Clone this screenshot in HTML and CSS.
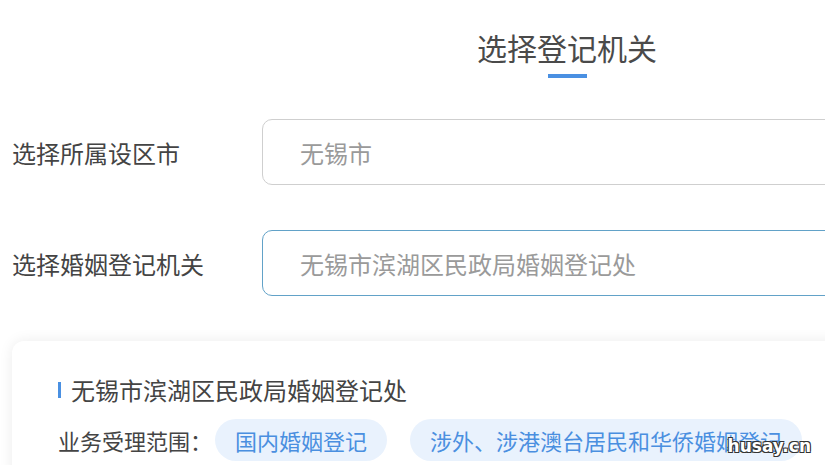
FILE: index.html
```html
<!DOCTYPE html>
<html>
  <head>
    <meta charset="utf-8">
    <meta name="viewport" content="width=device-width, initial-scale=1">
    <title>选择登记机关</title>
    <link rel="stylesheet" href="styles.css">
  </head>
  <body>
    <div class="page">
      <div class="page__header">
        <h1 class="page__title">选择登记机关</h1>
        <span class="page__underline"></span>
      </div>

      <form class="office-form">
        <div class="office-form__row">
          <label class="office-form__label">选择所属设区市</label>
          <input class="office-form__input" type="text" placeholder="无锡市" readonly>
        </div>
        <div class="office-form__row">
          <label class="office-form__label">选择婚姻登记机关</label>
          <input class="office-form__input office-form__input--active" type="text" placeholder="无锡市滨湖区民政局婚姻登记处" readonly>
        </div>
      </form>

      <div class="office-card">
        <div class="office-card__title">无锡市滨湖区民政局婚姻登记处</div>
        <div class="office-card__scope">
          <span class="office-card__scope-label">业务受理范围：</span>
          <span class="office-card__tag">国内婚姻登记</span>
          <span class="office-card__tag">涉外、涉港澳台居民和华侨婚姻登记</span>
        </div>
      </div>
    </div>
    <div class="watermark">husay.cn</div>
  </body>
</html>
```

FILE: styles.css
```css
html, body {
    margin: 0;
    padding: 0;
    background: #fff;
    overflow: hidden;
}
body {
    font-family: "Noto Sans CJK SC", "Noto Sans", sans-serif;
    color: #444;
    width: 825px;
    height: 465px;
    position: relative;
}

.page {
    width: 1134px;
}

.page__header {
    padding-top: 27px;
    display: flex;
    flex-direction: column;
    align-items: center;
}
.page__title {
    margin: 0;
    font-size: 30px;
    font-weight: normal;
    line-height: 40px;
    color: #4a4a4a;
}
.page__underline {
    display: block;
    width: 39px;
    height: 4px;
    margin-top: 7px;
    background: #4a90e2;
}

.office-form {
    margin-top: 41px;
    padding-left: 12px;
    display: flex;
    flex-direction: column;
    gap: 45px;
}
.office-form__row {
    display: flex;
    align-items: center;
}
.office-form__label {
    width: 250px;
    font-size: 24px;
    color: #444;
}
.office-form__input {
    flex: 1;
    height: 66px;
    box-sizing: border-box;
    border: 1px solid #cfcfcf;
    border-radius: 10px;
    padding: 0 37px;
    font-family: inherit;
    font-size: 24px;
    outline: none;
    background: #fff;
}
.office-form__input::placeholder {
    color: #9a9a9a;
}
.office-form__input--active {
    border-color: #62a2c8;
}

.office-card {
    margin: 45px 12px 0 12px;
    padding: 33px 46px 20px 46px;
    border-radius: 12px;
    background: #fff;
    box-shadow: 0 0 14px rgba(0, 0, 0, 0.08);
}
.office-card__title {
    font-size: 24px;
    line-height: 32px;
    color: #444;
    padding-left: 13px;
    position: relative;
}
.office-card__title::before {
    content: "";
    position: absolute;
    left: 0;
    top: 8px;
    width: 3px;
    height: 16px;
    background: #4a90e2;
}
.office-card__scope {
    margin-top: 13px;
    display: flex;
    align-items: center;
    gap: 23px;
}
.office-card__scope-label {
    font-size: 22px;
    color: #444;
    margin-right: -20px;
}
.office-card__tag {
    height: 42px;
    line-height: 42px;
    padding: 0 20px;
    border-radius: 21px;
    background: #e9f2fd;
    color: #4a8fe0;
    font-size: 22px;
}

.watermark {
    position: absolute;
    right: 14px;
    bottom: 9px;
    font-family: "DejaVu Sans", sans-serif;
    font-weight: bold;
    font-size: 17px;
    color: #fff;
    text-shadow: -1px -1px 0 #333, 1px -1px 0 #333, -1px 1px 0 #333, 1px 1px 0 #333;
}
```
